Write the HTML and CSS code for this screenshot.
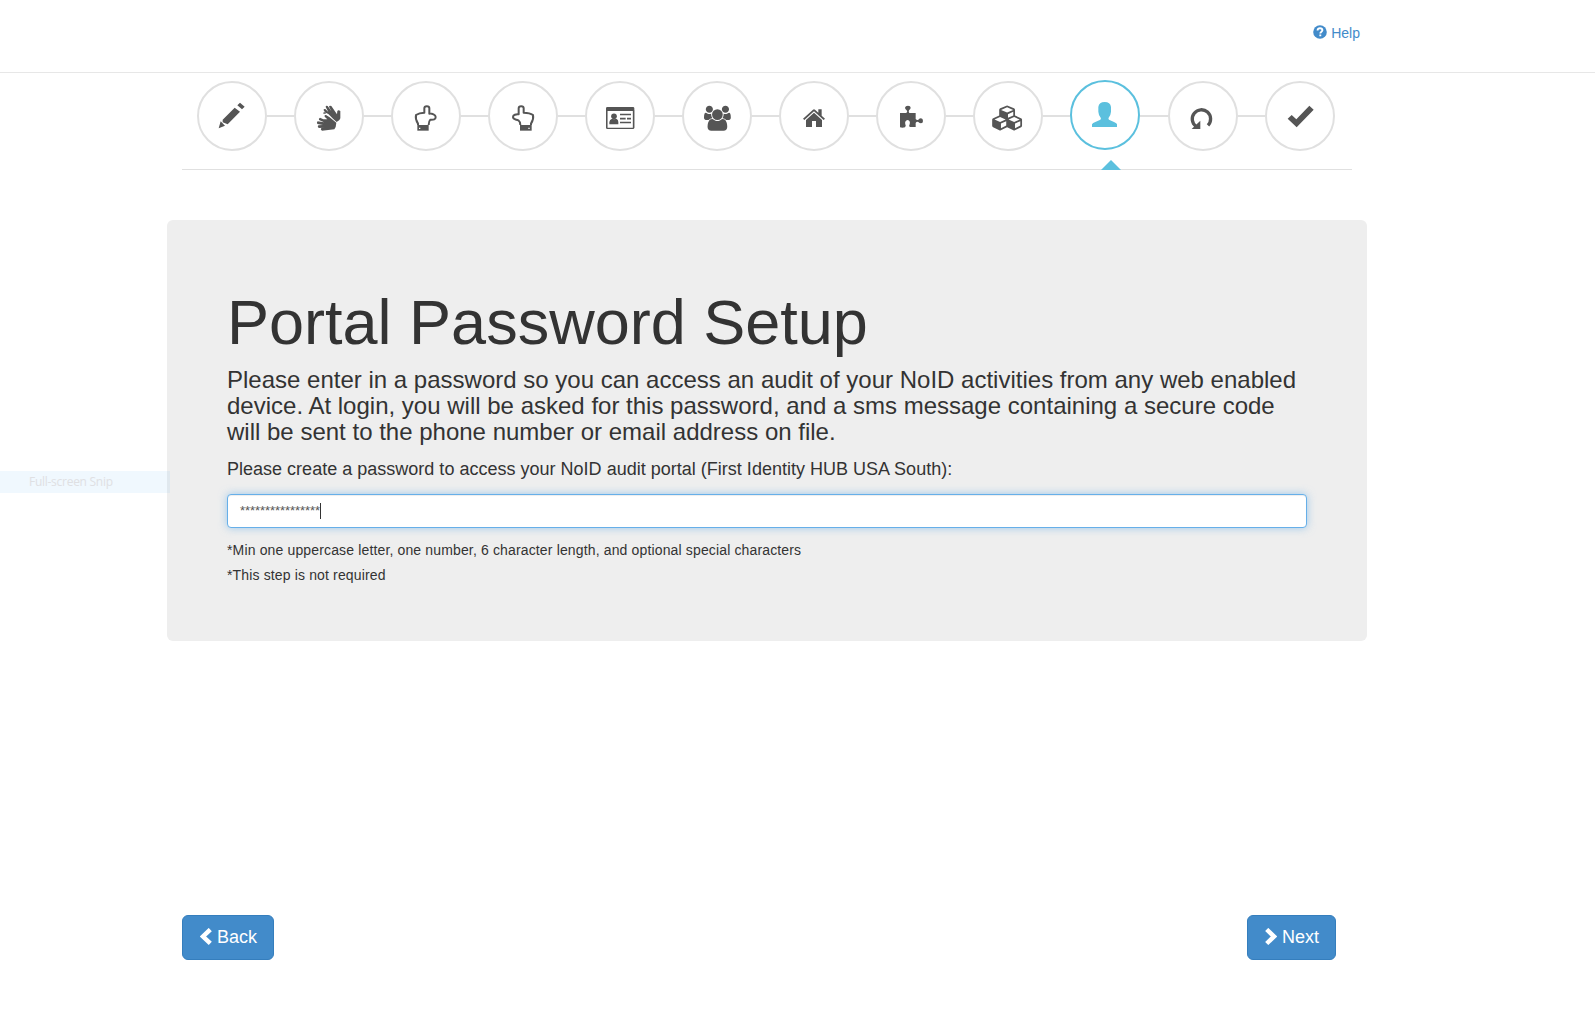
FILE: index.html
```html
<!DOCTYPE html>
<html lang="en">
<head>
<meta charset="utf-8">
<title>Portal Password Setup</title>
<link rel="stylesheet" href="styles.css">
</head>
<body>
<header class="topbar">
  <a class="help"><svg class="help-icon" viewBox="0 0 14 14"><circle cx="7" cy="7" r="6.8"/><path d="M4.6 5.6C4.6 3.9 5.500 3.300 7 3.300S9.400 4 9.400 5.300C9.400 6.700 7.300 6.700 7.300 8.500M7.300 9.500V11.300" fill="none" stroke="#fff" stroke-width="1.900"/></svg>Help</a>
</header>
<nav class="wizard">
  <div class="steps">
    <span class="step"><svg viewBox="51 63 210 210"><path d="M116 205l6-21 13 13zM128 179l36-36 16 12-37 38-15-6zM172 136l8-8 14 12-8 8z"/></svg></span>
    <i class="link"></i>
    <span class="step"><svg viewBox="342 63 210 210"><path d="M430 161q-1-5 4-4l11 5 14 14 11 10q10-4 11-11v-22q-6-5-9 0l-1 10-17-25q-6-3-7 2l7 13-11-15q-6-2-6 3l8 15-9-9q-6-1-5 4l7 10z"/><path d="M430 178l12 0-8-8q-2-6 4-5l11 7 20 16-2 13-4 7-37 4q-6-3-2-8l10-1-18 1q-5-5-1-8l14-1-17-3q-3-6 1-8l19 3-15-7q-2-5 3-7z"/></svg></span>
    <i class="link"></i>
    <span class="step"><svg viewBox="633 63 210 210"><path class="outline" d="M714 195v-4c-6-9-8-17-6-26 8-6 16-7 25-7v-13c0-8 15-8 15 0v16c8-1 19 4 19 10 0 9-8 8-16 8-4 4-5 9-5 16"/><path d="M712 195h34v17h-34z"/><path class="dot" d="M717 203h4v4h-4z"/></svg></span>
    <i class="link"></i>
    <span class="step"><svg viewBox="54 63 210 210"><path class="outline" d="M183 195v-4c6-9 8-17 6-26-8-6-16-7-28-7v-13c0-8-15-8-15 0v18c-8-1-17 2-17 8 0 8 8 7 16 10 5 4 6 8 6 14"/><path d="M150 195h35v17h-35z"/><path class="dot" d="M175 203h4v4h-4z"/></svg></span>
    <i class="link"></i>
    <span class="step"><svg viewBox="345 63 210 210"><path fill-rule="evenodd" d="M412 141h77q4 0 4 4v58q0 4-4 4h-77q-4 0-4-4v-58q0-4 4-4zm0 12v50h77v-50z"/><path d="M408 150h5v54h-5zM488 150h5v54h-5z" opacity=".5"/><circle cx="432" cy="169" r="8.500"/><path d="M418 193v-7q1-8 8-10l6 2 7-2q6 3 6 10v7zM450 161.500h33v4h-33zM450 173.500h17v5h-17zM471 173.500h12v5h-12zM450 185.500h33v4h-33z"/></svg></span>
    <i class="link"></i>
    <span class="step"><svg viewBox="636 63 210 210"><path transform="translate(699.300 137) scale(.0419)" d="M657 896q-162 5-265 128h-134q-82 0-138-40.500t-56-118.500q0-353 124-353 6 0 43.500 21t97.500 42.500 119 21.500q67 0 133-23-5 37-5 66 0 139 81 256zm1071 637q0 120-73 189.500t-194 69.500h-874q-121 0-194-69.500t-73-189.500q0-53 3.500-103.500t14-109 26.500-108.500 43-97.500 62-81 85.500-53.500 111.500-20q10 0 43 21.500t73 48 107 48 135 21.500 135-21.500 107-48 73-48 43-21.500q61 0 111.500 20t85.500 53.500 62 81 43 97.500 26.500 108.500 14 109 3.500 103.500zm-1024-1277q0 106-75 181t-181 75-181-75-75-181 75-181 181-75 181 75 75 181zm704 384q0 159-112.500 271.500t-271.500 112.500-271.500-112.500-112.500-271.500 112.500-271.500 271.500-112.500 271.500 112.500 112.500 271.500zm576 225q0 78-56 118.500t-138 40.500h-134q-103-123-265-128 81-117 81-256 0-29-5-66 66 23 133 23 59 0 119-21.500t97.500-42.500 43.500-21q124 0 124 353zm-128-609q0 106-75 181t-181 75-181-75-75-181 75-181 181-75 181 75 75 181z"/></svg></span>
    <i class="link"></i>
    <span class="step"><svg viewBox="57 63 210 210"><path d="M129 176l30-27q3-3 6 0l10 9v-10h10v19l10 9-4 4-29-26-29 26zM138 180l24-22 24 22v21h-18v-18h-12v18h-18z"/></svg></span>
    <i class="link"></i>
    <span class="step"><svg viewBox="348 63 210 210"><path d="M420 159h19q5-4 1-8-5-4-5-8 1-6 9-6t8 6q0 4-5 8-2 5 1 8h19v18q4 4 8 2 4-4 8-4 6 1 6 8t-6 7q-4 0-8-4-5-2-8 3v12h-18q-3-4 0-8 3-11-6-13-10 2-7 13 3 5-1 9-8 2-15 0z"/></svg></span>
    <i class="link"></i>
    <span class="step"><svg viewBox="639 63 210 210"><path transform="translate(696.500 136.500) scale(.0412 .0419)" d="M640 1632l384-192v-314l-384 164v342zm-64-454l404-173-404-173-404 173zm1088 454l384-192v-314l-384 164v342zm-64-454l404-173-404-173-404 173zm-448-293l384-165v-266l-384 164v267zm-64-379l441-189-441-189-441 189zm1088 518v416q0 36-19 67t-52 47l-448 224q-25 14-57 14t-57-14l-448-224q-4-2-7-4-2 2-7 4l-448 224q-25 14-57 14t-57-14l-448-224q-33-16-52-47t-19-67v-416q0-38 21.500-70t56.500-48l434-186v-400q0-38 21.500-70t56.500-48l448-192q23-10 50-10t50 10l448 192q35 16 56.500 48t21.500 70v400l434 186q36 16 57 48t21 70z"/></svg></span>
    <i class="link"></i>
    <span class="step active"><svg viewBox="60 60 210 210"><path d="M126 201v-8q2-4 10-7l15-7q3-3 1-6-6-6-7-18v-14q2-15 19-15t19 15v14q-1 12-7 18-2 3 1 6l15 7q9 4 9 7v8z"/></svg></span>
    <i class="link"></i>
    <span class="step"><svg viewBox="354 63 210 210"><path class="arc" d="M438 199A27.500 27.500 0 1 1 474 196"/><path d="M425 207h26v-25z"/></svg></span>
    <i class="link"></i>
    <span class="step"><svg viewBox="645 63 210 210"><path d="M713 176l12-11 14 13 39-41 13 12-51 53z"/></svg></span>
  </div>
  <span class="pointer"></span>
</nav>
<main class="panel">
  <h1>Portal Password Setup</h1>
  <h3>Please enter in a password so you can access an audit of your NoID activities from any web enabled device. At login, you will be asked for this password, and a sms message containing a secure code will be sent to the phone number or email address on file.</h3>
  <h4>Please create a password to access your NoID audit portal (First Identity HUB USA South):</h4>
  <div class="field"><span>****************</span><i class="caret"></i></div>
  <p>*Min one uppercase letter, one number, 6 character length, and optional special characters</p>
  <p>*This step is not required</p>
</main>
<footer class="actions">
  <button class="btn back"><svg viewBox="0 0 12 18"><path d="M10.300 1.500L3 8.500l7.300 7"/></svg>Back</button>
  <button class="btn next"><svg viewBox="0 0 12 18"><path d="M1.700 1.500l7.300 7-7.300 7"/></svg>Next</button>
</footer>
<div class="snip">Full-screen Snip</div>
</body>
</html>
```
FILE: styles.css
```css
* { box-sizing: border-box; }
body {
  margin: 0;
  height: 1017px;
  overflow: hidden;
  background: #fff;
  color: #333;
  font: 14px/20px "Liberation Sans", Arial, sans-serif;
}
.topbar {
  height: 73px;
  border-bottom: 1px solid #e7e7e7;
  padding: 23px 235px 0 0;
  display: flex;
  justify-content: flex-end;
}
.help { display: flex; color: #428bca; height: 20px; }
.help-icon { width: 14px; height: 14px; margin: 2px 4px 0 0; fill: #428bca; }

.wizard {
  position: relative;
  width: 1170px;
  height: 97px;
  margin-left: 182px;
  padding: 8px 17px 0 15px;
  border-bottom: 1px solid #e0e0e0;
}
.steps { display: flex; align-items: center; }
.link { flex: none; width: 27px; height: 2px; background: #e0e0e0; }
.step {
  position: relative;
  flex: none;
  width: 70px;
  height: 70px;
  border: 2px solid #e0e0e0;
  border-radius: 50%;
  background: #fff;
}
.step svg { display: block; width: 70px; height: 70px; margin: -2px; fill: #555; }
.step .outline { fill: none; stroke: #555; stroke-width: 6; stroke-linejoin: round; }
.step .arc { fill: none; stroke: #555; stroke-width: 10; }
.step .dot { fill: #fff; }
.step.active { top: -1px; border-color: #5bc0de; }
.step.active svg { fill: #5bc0de; }
.step.active + .link { width: 28px; }
.pointer {
  position: absolute;
  left: 919px;
  bottom: -1px;
  border: 10px solid transparent;
  border-top: 0;
  border-bottom-color: #5bc0de;
}

.panel {
  width: 1200px;
  height: 421px;
  margin: 50px 0 0 167px;
  padding: 68px 60px 0;
  border-radius: 6px;
  background: #eee;
}
h1, h3, h4, p { margin: 0; font-weight: 400; }
h1 { font-size: 63px; line-height: 69px; margin-bottom: 10px; }
h3 { font-size: 24px; line-height: 26px; letter-spacing: .005px; }
h4 { font-size: 18px; line-height: 20px; margin: 14px 0 15px; letter-spacing: .01px; }
.field {
  display: flex;
  align-items: center;
  height: 34px;
  margin-bottom: 12px;
  padding: 0 12px;
  border: 1px solid #66afe9;
  border-radius: 4px;
  background: #fff;
  color: #555;
  font-size: 13px;
  letter-spacing: -.06px;
  box-shadow: inset 0 1px 1px rgba(0,0,0,.075), 0 0 8px rgba(102,175,233,.6);
}
.caret { width: 1px; height: 16px; background: #333; }
.panel p { margin-bottom: 5px; letter-spacing: .146px; }

.actions {
  display: flex;
  justify-content: space-between;
  width: 1154px;
  margin: 274px 0 0 182px;
}
.btn {
  display: flex;
  align-items: center;
  height: 45px;
  padding: 0 16px 2px;
  border: 1px solid #357ebd;
  border-radius: 6px;
  background: #428bca;
  color: #fff;
  font: 18px/24px "Liberation Sans", Arial, sans-serif;
}
.btn svg { width: 12px; height: 18px; margin: 0 5px 0 1px; fill: none; stroke: #fff; stroke-width: 4.5; }
.back { width: 92px; }
.next { width: 89px; padding-right: 14px; }

.snip {
  position: absolute;
  left: 0;
  top: 471px;
  width: 170px;
  height: 22px;
  padding-left: 29px;
  background: rgba(0,140,240,.06);
  color: #dfe0e3;
  font: 12px/22px "Open Sans", "Noto Sans", sans-serif;
  letter-spacing: -.27px;
}
```
